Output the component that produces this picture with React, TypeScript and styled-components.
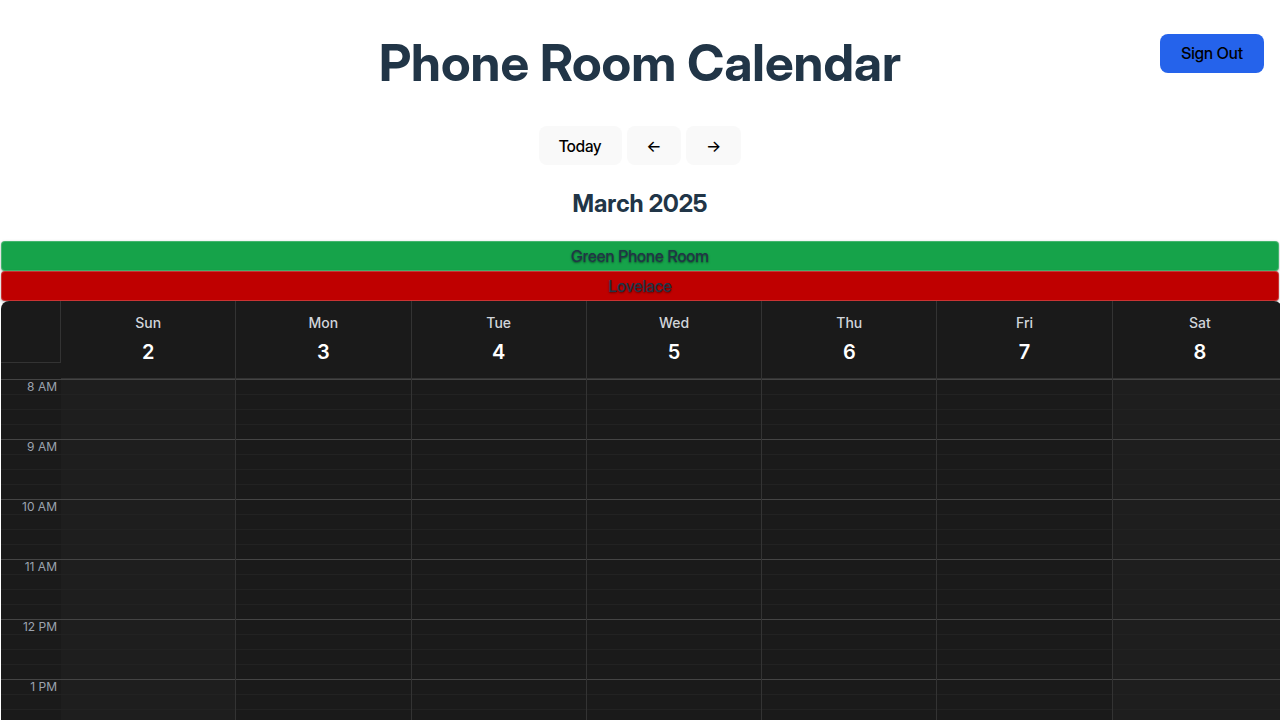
import React from "react";
import styled, { createGlobalStyle } from "styled-components";

const displayFont = `"Inter Display", Inter, "Liberation Sans", sans-serif`;

const GlobalStyle = createGlobalStyle`
  *, *::before, *::after { box-sizing: border-box; }
  body {
    margin: 0;
    background: #ffffff;
    color: #213547;
    font-family: Inter, "Liberation Sans", sans-serif;
    font-size: 16px;
    line-height: 24px;
  }
`;

const Page = styled.main`
  position: relative;
  height: 100vh;
  overflow: hidden;
  padding-top: 34px;
  text-align: center;
`;

const Title = styled.h1`
  margin: 0 0 34px;
  font-family: ${displayFont};
  font-size: 51px;
  line-height: 58px;
  font-weight: 700;
`;

const Button = styled.button<{ $primary?: boolean }>`
  height: 39px;
  padding: ${(p) => (p.$primary ? "0 21px 2px" : "0 20px")};
  border: 0;
  border-radius: 8px;
  background: ${(p) => (p.$primary ? "#2563eb" : "#f9f9f9")};
  color: #000000;
  font: 500 16px/20px ${displayFont};
  cursor: pointer;
`;

const Account = styled.div`
  position: absolute;
  top: 34px;
  right: 16px;
`;

const Navigation = styled.nav`
  display: flex;
  justify-content: center;
  gap: 5px;
`;

const Month = styled.h2`
  margin: 22px 0 20px;
  font-family: ${displayFont};
  font-size: 24px;
  line-height: 34px;
  font-weight: 700;
`;

const Rooms = styled.ul`
  list-style: none;
  margin: 0 1px;
  padding: 0;
`;

const Room = styled.li<{ $color: string }>`
  height: 30px;
  border: 1px solid rgba(255, 255, 255, 0.2);
  border-radius: 4px;
  background: ${(p) => p.$color};
  box-shadow: 0 1px 3px rgba(0, 0, 0, 0.3);
  font-family: ${displayFont};
  font-weight: 500;
  line-height: 28px;
  text-shadow: 0 1px 2px rgba(0, 0, 0, 0.5);
`;

const Calendar = styled.section`
  margin: 0 -2px 0 1px;
  border-radius: 8px 8px 0 0;
  overflow: hidden;
  background: #1a1a1a;
`;

const Columns = styled.div`
  display: grid;
  grid-template-columns: 60px repeat(7, 1fr);
  margin-right: -6px;
`;

const Corner = styled.div`
  height: 62px;
  border-right: 1px solid #333333;
  border-bottom: 1px solid #333333;
`;

const DayHeader = styled.div`
  height: 78px;
  padding-top: 12px;
  border-right: 1px solid #333333;
  border-bottom: 1px solid #333333;
`;

const DayName = styled.div`
  font-size: 14px;
  line-height: 20px;
  font-weight: 500;
  color: #d1d5db;
`;

const DayNumber = styled.div`
  margin-top: 4px;
  font-size: 20px;
  line-height: 30px;
  font-weight: 600;
  color: #ffffff;
`;

const Lane = styled.div<{ $weekend?: boolean; $day?: boolean }>`
  background: ${(p) => (p.$weekend ? "#1e1e1e" : "#1a1a1a")};
  border-right: ${(p) => (p.$day ? "1px solid #333333" : "0")};
`;

const Hour = styled.div`
  height: 60px;
  border-top: 1px solid #444444;
  padding-right: 4px;
  background: repeating-linear-gradient(
    to bottom,
    transparent 0,
    transparent 14px,
    #222222 14px,
    #222222 15px
  ) 0 0 / 100% 45px no-repeat;
  font-size: 12px;
  line-height: 14px;
  color: #9ca3af;
  text-align: right;
`;

const rooms = [
  { name: "Green Phone Room", color: "#16a34a" },
  { name: "Lovelace", color: "#bf0000" },
];

const days = [
  { name: "Sun", date: 2 },
  { name: "Mon", date: 3 },
  { name: "Tue", date: 4 },
  { name: "Wed", date: 5 },
  { name: "Thu", date: 6 },
  { name: "Fri", date: 7 },
  { name: "Sat", date: 8 },
];

const hours = ["8 AM", "9 AM", "10 AM", "11 AM", "12 PM", "1 PM"];

export default function App() {
  return (
    <Page>
      <GlobalStyle />
      <Title>Phone Room Calendar</Title>
      <Account>
        <Button $primary>Sign Out</Button>
      </Account>
      <Navigation aria-label="Week">
        <Button>Today</Button>
        <Button aria-label="Previous week">←</Button>
        <Button aria-label="Next week">→</Button>
      </Navigation>
      <Month>March 2025</Month>
      <Rooms>
        {rooms.map((room) => (
          <Room key={room.name} $color={room.color}>
            {room.name}
          </Room>
        ))}
      </Rooms>
      <Calendar>
        <Columns>
          <Corner />
          {days.map((day) => (
            <DayHeader key={day.name}>
              <DayName>{day.name}</DayName>
              <DayNumber>{day.date}</DayNumber>
            </DayHeader>
          ))}
        </Columns>
        <Columns>
          <Lane>
            {hours.map((hour) => (
              <Hour key={hour}>{hour}</Hour>
            ))}
          </Lane>
          {days.map((day) => (
            <Lane
              key={day.name}
              $day
              $weekend={day.name === "Sun" || day.name === "Sat"}
            >
              {hours.map((hour) => (
                <Hour key={hour} />
              ))}
            </Lane>
          ))}
        </Columns>
      </Calendar>
    </Page>
  );
}
